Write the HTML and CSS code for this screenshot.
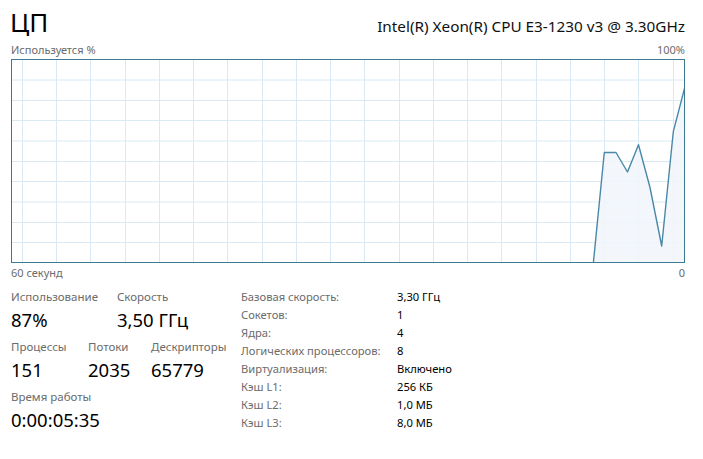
FILE: index.html
```html
<!DOCTYPE html>
<html lang="ru">
<head>
<meta charset="utf-8">
<link rel="stylesheet" href="styles.css">
</head>
<body>
<div class="page">
  <div class="header">
    <div class="title">ЦП</div>
    <div class="cpu-name">Intel(R) Xeon(R) CPU E3-1230 v3 @ 3.30GHz</div>
  </div>
  <div class="axis-row top">
    <span>Используется %</span>
    <span>100%</span>
  </div>
  <svg class="graph" width="674" height="204" viewBox="0 0 674 204">
    <g class="grid" stroke="#d9eaf4" stroke-width="1">
      <line x1="0" y1="21" x2="674" y2="21"/>
      <line x1="0" y1="41.5" x2="674" y2="41.5"/>
      <line x1="0" y1="61.5" x2="674" y2="61.5"/>
      <line x1="0" y1="82" x2="674" y2="82"/>
      <line x1="0" y1="102.5" x2="674" y2="102.5"/>
      <line x1="0" y1="122.5" x2="674" y2="122.5"/>
      <line x1="0" y1="143" x2="674" y2="143"/>
      <line x1="0" y1="163.5" x2="674" y2="163.5"/>
      <line x1="0" y1="183.5" x2="674" y2="183.5"/>
      <line x1="11.5" y1="0" x2="11.5" y2="204"/>
      <line x1="45.5" y1="0" x2="45.5" y2="204"/>
      <line x1="79.5" y1="0" x2="79.5" y2="204"/>
      <line x1="114.5" y1="0" x2="114.5" y2="204"/>
      <line x1="148.5" y1="0" x2="148.5" y2="204"/>
      <line x1="182.5" y1="0" x2="182.5" y2="204"/>
      <line x1="216.5" y1="0" x2="216.5" y2="204"/>
      <line x1="251.5" y1="0" x2="251.5" y2="204"/>
      <line x1="285.5" y1="0" x2="285.5" y2="204"/>
      <line x1="319.5" y1="0" x2="319.5" y2="204"/>
      <line x1="353.5" y1="0" x2="353.5" y2="204"/>
      <line x1="388.5" y1="0" x2="388.5" y2="204"/>
      <line x1="422.5" y1="0" x2="422.5" y2="204"/>
      <line x1="456.5" y1="0" x2="456.5" y2="204"/>
      <line x1="490.5" y1="0" x2="490.5" y2="204"/>
      <line x1="525.5" y1="0" x2="525.5" y2="204"/>
      <line x1="559.5" y1="0" x2="559.5" y2="204"/>
      <line x1="593.5" y1="0" x2="593.5" y2="204"/>
      <line x1="627.5" y1="0" x2="627.5" y2="204"/>
      <line x1="662.5" y1="0" x2="662.5" y2="204"/>
    </g>
    <polygon fill="#f1f6fa" fill-opacity="0.85" points="582.3,204 593.3,93.5 605,93.5 616.5,113 627.5,85.7 639,128.5 650.7,187 662.3,72.7 673.5,29.3 673.5,204"/>
    <polyline fill="none" stroke="#4a88a8" stroke-width="1.4" stroke-linejoin="round" points="582.3,204.5 593.3,93.5 605,93.5 616.5,113 627.5,85.7 639,128.5 650.7,187 662.3,72.7 673.5,29.3"/>
    <rect x="0.5" y="0.5" width="673" height="203" fill="none" stroke="#3c7a92" stroke-width="1"/>
  </svg>
  <div class="axis-row bottom">
    <span>60 секунд</span>
    <span>0</span>
  </div>
  <div class="details">
    <div class="stats">
      <div class="stat-row">
        <div class="stat w-use"><div class="label">Использование</div><div class="value">87%</div></div>
        <div class="stat"><div class="label">Скорость</div><div class="value">3,50 ГГц</div></div>
      </div>
      <div class="stat-row">
        <div class="stat w-proc"><div class="label">Процессы</div><div class="value">151</div></div>
        <div class="stat w-thr"><div class="label">Потоки</div><div class="value">2035</div></div>
        <div class="stat"><div class="label">Дескрипторы</div><div class="value">65779</div></div>
      </div>
      <div class="stat-row">
        <div class="stat"><div class="label">Время работы</div><div class="value">0:00:05:35</div></div>
      </div>
    </div>
    <div class="props">
      <div class="k">Базовая скорость:</div><div class="v">3,30 ГГц</div>
      <div class="k">Сокетов:</div><div class="v">1</div>
      <div class="k">Ядра:</div><div class="v">4</div>
      <div class="k">Логических процессоров:</div><div class="v">8</div>
      <div class="k">Виртуализация:</div><div class="v">Включено</div>
      <div class="k">Кэш L1:</div><div class="v">256 КБ</div>
      <div class="k">Кэш L2:</div><div class="v">1,0 МБ</div>
      <div class="k">Кэш L3:</div><div class="v">8,0 МБ</div>
    </div>
  </div>
</div>
</body>
</html>
```
FILE: styles.css
```css
html, body {
  margin: 0;
  padding: 0;
  background: #ffffff;
}
body {
  font-family: "Noto Sans", "Open Sans", sans-serif;
  color: #000000;
}
.page {
  width: 674px;
  padding: 0 18px 0 11px;
}
.header {
  display: flex;
  justify-content: space-between;
  align-items: baseline;
  height: 38px;
  padding-top: 3px;
}
.title {
  font-size: 26px;
  line-height: 38px;
  margin-left: -1px;
  font-weight: 400;
}
.cpu-name {
  font-size: 15.3px;
  line-height: 38px;
  color: #111111;
}
.axis-row {
  display: flex;
  justify-content: space-between;
  font-size: 11px;
  color: #6b6b6b;
}
.axis-row.top {
  height: 18px;
  line-height: 18px;
}
.axis-row.bottom {
  height: 20px;
  line-height: 20px;
}
.graph {
  display: block;
}
.details {
  display: flex;
  margin-top: 5px;
}
.stats {
  width: 230px;
}
.stat-row {
  display: flex;
  margin-bottom: 4px;
}
.w-use { width: 106px; }
.w-proc { width: 77px; }
.w-thr { width: 63px; }
.label {
  font-size: 11.5px;
  line-height: 18px;
  color: #6b6b6b;
}
.value {
  font-size: 18.5px;
  line-height: 28px;
}
.props {
  display: grid;
  grid-template-columns: 156px auto;
  grid-auto-rows: 18px;
  font-size: 11.2px;
  line-height: 18px;
}
.props .k {
  color: #6b6b6b;
}
.props .v {
  color: #000000;
}
```
